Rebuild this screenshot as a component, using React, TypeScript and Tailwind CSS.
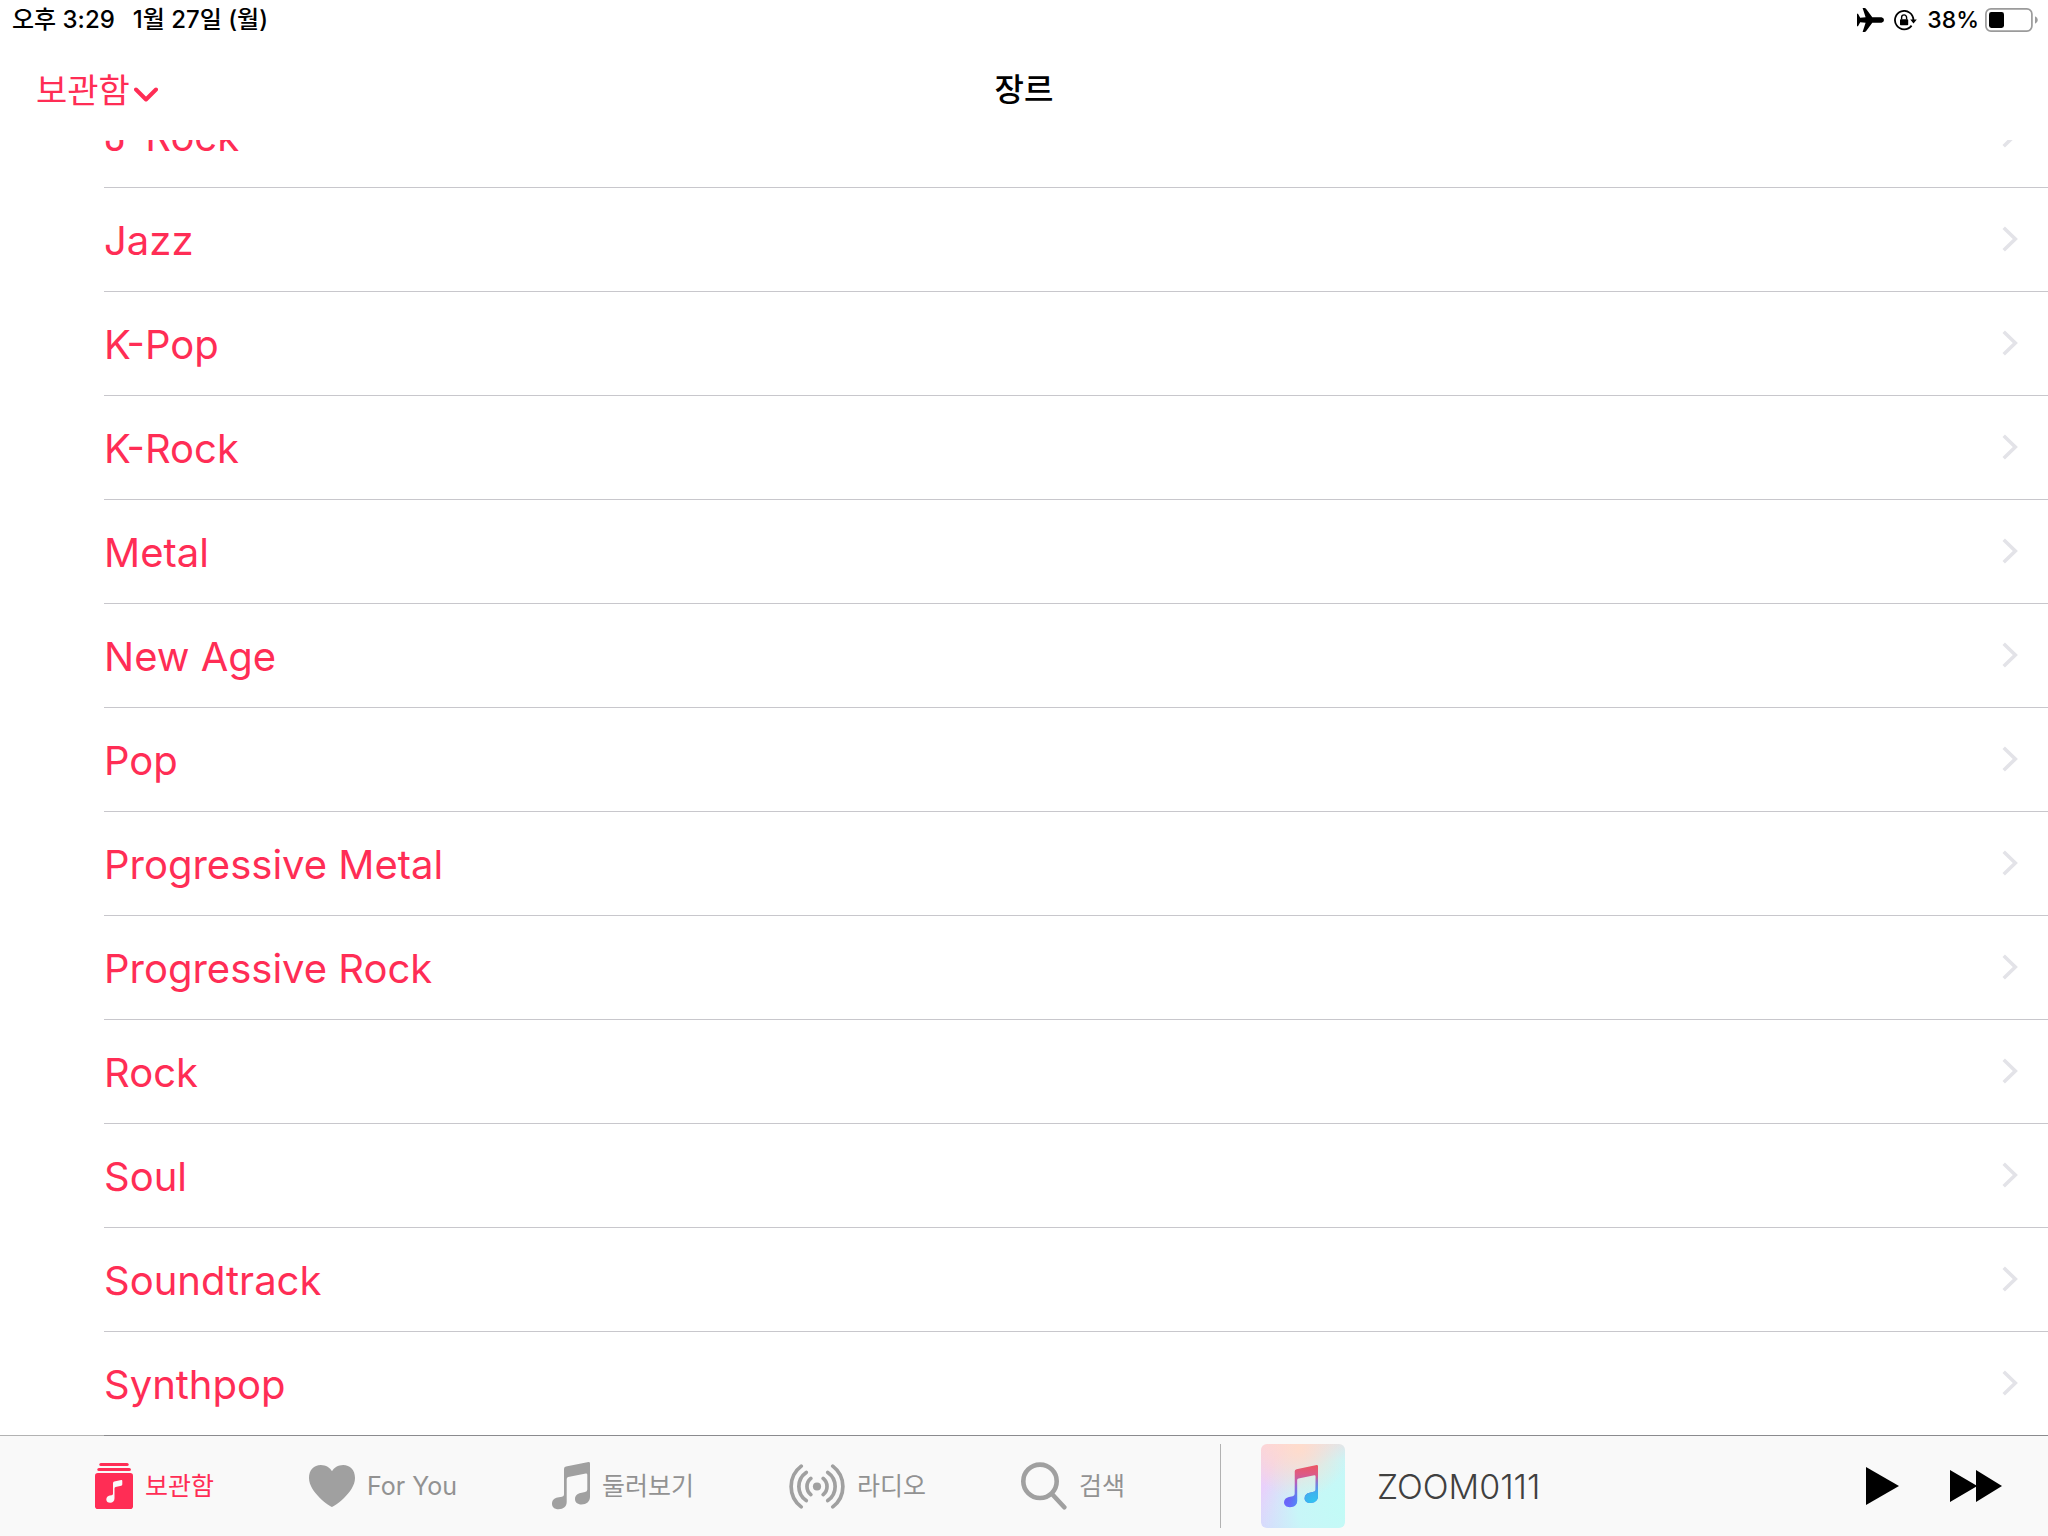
import React, { useId } from "react";

const GENRES = [
  "J-Rock",
  "Jazz",
  "K-Pop",
  "K-Rock",
  "Metal",
  "New Age",
  "Pop",
  "Progressive Metal",
  "Progressive Rock",
  "Rock",
  "Soul",
  "Soundtrack",
  "Synthpop",
];

const NOTE_PATH =
  "M12 7Q12 5 14 4.6L36.5.1Q38 0 38 1.5V35C38 39.5 34.5 42.5 29.5 42.5C25.5 42.5 23 40.2 23 37C23 33.5 25.5 31.5 28.5 31L33 30Q35.3 29.5 35.3 27.5V12.8Q35.3 11.2 33.8 11.4L16.2 15Q14.7 15.3 14.7 17V40C14.7 44.5 11.5 47.2 6.5 47.2C2.5 47.2 0 45 0 41.7C0 38.3 2.5 36.2 5.5 35.6L10 34.8Q12 34.3 12 32.5Z";

function AirplaneIcon() {
  return (
    <svg width="27" height="24" viewBox="0 0 27 24" fill="currentColor" aria-hidden="true">
      <path d="M5.6 0H7.6Q8.5 0 9 .8L15.3 9.3H24.5Q27 9.8 27 12Q27 14.2 24.5 14.7H15.3L9 23.2Q8.5 24 7.6 24H5.6L8.6 14.7L3.2 14.3L1 18.3H0V5.7H1L3.2 9.7L8.6 9.3Z" />
    </svg>
  );
}

function RotationLockIcon() {
  return (
    <svg width="23" height="21" viewBox="0 0 23 21" fill="none" stroke="currentColor" aria-hidden="true">
      <path d="M17.6 15.6A9.2 9.2 0 1 1 19.4 10" strokeWidth="1.8" />
      <path d="M16.2 9.6H22.8L19.5 13.6Z" fill="currentColor" stroke="none" />
      <rect x="6" y="9.2" width="8.2" height="6" rx="0.8" fill="currentColor" stroke="none" />
      <path d="M7.6 9.5V7.4A2.5 2.5 0 0 1 12.6 7.4V9.5" strokeWidth="1.4" />
    </svg>
  );
}

function BatteryIcon() {
  return (
    <svg width="53" height="24" viewBox="0 0 53 24" aria-hidden="true">
      <rect x="0.9" y="0.9" width="46" height="22.2" rx="5" fill="none" stroke="#9b9b9b" strokeWidth="1.7" />
      <rect x="4" y="4" width="15" height="16" rx="2.4" fill="#000" />
      <path d="M50 8.3Q52.8 9.5 52.8 12Q52.8 14.5 50 15.7Z" fill="#9b9b9b" />
    </svg>
  );
}

function LibraryIcon() {
  return (
    <svg width="38" height="46" viewBox="0 0 38 46" fill="currentColor" aria-hidden="true">
      <rect x="4.3" y="0" width="29.4" height="3" rx="1.5" />
      <rect x="2.3" y="5" width="33.6" height="3" rx="1.5" />
      <rect x="0" y="10" width="38" height="36" rx="2.8" />
      <path
        d="M18 20.3Q18 18.9 19.3 18.6L26.2 17.1Q27.3 16.9 27.3 18V21.3Q27.3 22.4 26.2 22.7L20.6 24Q19.5 24.3 19.5 25.4V35.2C19.5 38 17.8 39.7 15.2 39.7C12.8 39.7 11.3 38.4 11.3 36.4C11.3 34.3 12.8 33 14.8 32.6L16.6 32.2Q18 31.9 18 30.7Z"
        fill="#f9f9f9"
      />
    </svg>
  );
}

function HeartIcon() {
  return (
    <svg width="46" height="42" viewBox="0 0 46 42" fill="currentColor" aria-hidden="true">
      <path d="M23 42C21.5 42 0 27.5 0 13C0 5 5 0 11.8 0C17 0 21 2.8 23 6.3C25 2.8 29 0 34.2 0C41 0 46 5 46 13C46 27.5 24.5 42 23 42Z" />
    </svg>
  );
}

function NotesIcon() {
  return (
    <svg width="38" height="48" viewBox="0 0 38 48" fill="currentColor" aria-hidden="true">
      <path d={NOTE_PATH} />
    </svg>
  );
}

function RadioIcon() {
  return (
    <svg
      width="56"
      height="45"
      viewBox="0 0 56 45"
      fill="none"
      stroke="currentColor"
      strokeWidth="3.7"
      strokeLinecap="round"
      aria-hidden="true"
    >
      <circle cx="28" cy="22.5" r="4.1" fill="currentColor" stroke="none" />
      <path d="M12.2 2.1A25.7 25.7 0 0 0 12.2 42.9M17.2 8.4A17.2 17.2 0 0 0 17.2 36.6M21.8 14.4A10.5 10.5 0 0 0 21.8 30.6" />
      <path d="M43.8 2.1A25.7 25.7 0 0 1 43.8 42.9M38.8 8.4A17.2 17.2 0 0 1 38.8 36.6M34.2 14.4A10.5 10.5 0 0 1 34.2 30.6" />
    </svg>
  );
}

function SearchIcon() {
  return (
    <svg width="46" height="48" viewBox="0 0 46 48" fill="none" stroke="currentColor" aria-hidden="true">
      <circle cx="19" cy="19.3" r="16.7" strokeWidth="4.6" />
      <path d="M31 32L43.3 45.2" strokeWidth="4.6" strokeLinecap="round" />
    </svg>
  );
}

function Chevron() {
  return (
    <svg
      width="16"
      height="26"
      viewBox="0 0 16 26"
      fill="none"
      stroke="#e3e3e8"
      strokeWidth="3.6"
      className="mb-0.5 shrink-0"
      aria-hidden="true"
    >
      <path d="M1.7 1.8L13.3 13L1.7 24.2" />
    </svg>
  );
}

function AlbumNote() {
  const warm = useId();
  const cool = useId();
  return (
    <svg width="34" height="43" viewBox="0 0 38 48" className="mr-1" aria-hidden="true">
      <defs>
        <linearGradient id={warm} x1="0" y1="0" x2="0" y2="1">
          <stop offset="0" stopColor="#ec5763" />
          <stop offset="0.22" stopColor="#dc5a86" />
          <stop offset="0.5" stopColor="#a463cf" />
          <stop offset="0.8" stopColor="#6a62f5" />
          <stop offset="1" stopColor="#6a6bff" />
        </linearGradient>
        <radialGradient id={cool} gradientUnits="userSpaceOnUse" cx="34" cy="42" r="30">
          <stop offset="0" stopColor="#2fc6f0" />
          <stop offset="0.4" stopColor="#3fb0ee" />
          <stop offset="1" stopColor="#4a90f5" stopOpacity="0" />
        </radialGradient>
      </defs>
      <path d={NOTE_PATH} fill={`url(#${warm})`} />
      <path d={NOTE_PATH} fill={`url(#${cool})`} />
    </svg>
  );
}

const TABS = [
  { label: "보관함", Icon: LibraryIcon, active: true },
  { label: "For You", Icon: HeartIcon, active: false },
  { label: "둘러보기", Icon: NotesIcon, active: false },
  { label: "라디오", Icon: RadioIcon, active: false },
  { label: "검색", Icon: SearchIcon, active: false },
];

function StatusBar() {
  return (
    <div className="flex h-10 items-center justify-between pl-3 pr-2.5 font-medium text-black">
      <div className="flex gap-[18px] text-2xl">
        <span>오후 3:29</span>
        <span>1월 27일 (월)</span>
      </div>
      <div className="flex items-center text-[23px]">
        <AirplaneIcon />
        <span className="ml-2.5">
          <RotationLockIcon />
        </span>
        <span className="ml-2.5">38%</span>
        <span className="ml-1.5">
          <BatteryIcon />
        </span>
      </div>
    </div>
  );
}

export default function App() {
  return (
    <div className="flex h-screen flex-col overflow-hidden bg-white font-['Inter','Noto_Sans_CJK_KR',sans-serif] text-[#ff2d55]">
      <header className="z-10 h-[140px] shrink-0 bg-white">
        <StatusBar />
        <div className="grid h-[100px] grid-cols-3 items-center">
          <button type="button" className="flex items-center gap-1 justify-self-start pl-9 text-[34px]">
            보관함
            <svg
              width="24"
              height="15"
              viewBox="0 0 24 15"
              fill="none"
              stroke="currentColor"
              strokeWidth="4"
              strokeLinecap="round"
              strokeLinejoin="round"
              className="mt-2"
              aria-hidden="true"
            >
              <path d="M2 2.5L12 12.5L22 2.5" />
            </svg>
          </button>
          <h1 className="text-center text-[32px] font-medium text-black">장르</h1>
        </div>
      </header>

      <main className="flex min-h-0 flex-1 flex-col justify-end overflow-hidden">
        <ul className="pl-[104px]">
          {GENRES.map((genre) => (
            <li key={genre} className="h-[104px] border-b border-[#c8c7cc]">
              <a href="#genre" className="flex h-full items-center justify-between pr-[30px] text-[40px]">
                <span className="pt-0.5">{genre}</span>
                <Chevron />
              </a>
            </li>
          ))}
        </ul>
      </main>

      <footer className="z-10 -mt-px grid h-[101px] shrink-0 grid-cols-[305fr_207fr] border-t border-black/30 bg-[#f9f9f9] bg-clip-padding">
        <nav className="flex min-w-0 items-center justify-evenly text-[25px]">
          {TABS.map(({ label, Icon, active }) => (
            <button
              key={label}
              type="button"
              aria-current={active ? "page" : undefined}
              className={
                active
                  ? "flex items-center gap-3 whitespace-nowrap text-[#ff2d55]"
                  : "flex items-center gap-3 whitespace-nowrap text-[#a0a0a0]"
              }
            >
              <Icon />
              <span className={active ? "pt-0.5" : "pt-0.5 text-[#929292]"}>{label}</span>
            </button>
          ))}
        </nav>
        <section className="my-2 flex min-w-0 items-center border-l border-[#b2b2b2] pl-10 pr-[46px]">
          <div className="flex size-[84px] shrink-0 items-center justify-center rounded-md bg-[radial-gradient(circle_at_45%_5%,#ffdccc_0%,#ffdccc00_55%),radial-gradient(circle_at_100%_75%,#c2fbf6_0%,#c8f6f8_45%,#c8f6f800_80%),linear-gradient(180deg,#fbd3dc_0%,#ead0fb_50%,#d6dcfc_100%)]">
            <AlbumNote />
          </div>
          <span className="ml-8 flex-1 truncate text-[34px] font-light text-[#404040]">ZOOM0111</span>
          <button type="button" aria-label="Play" className="text-black">
            <svg width="34" height="38" viewBox="0 0 34 38" fill="currentColor" aria-hidden="true">
              <path d="M0 0L33 19L0 38Z" />
            </svg>
          </button>
          <button type="button" aria-label="Next track" className="ml-[50px] text-black">
            <svg width="52" height="32" viewBox="0 0 52 32" fill="currentColor" aria-hidden="true">
              <path d="M0 0L26 15.3V0L52 16L26 32V16.7L0 32Z" />
            </svg>
          </button>
        </section>
      </footer>
    </div>
  );
}
